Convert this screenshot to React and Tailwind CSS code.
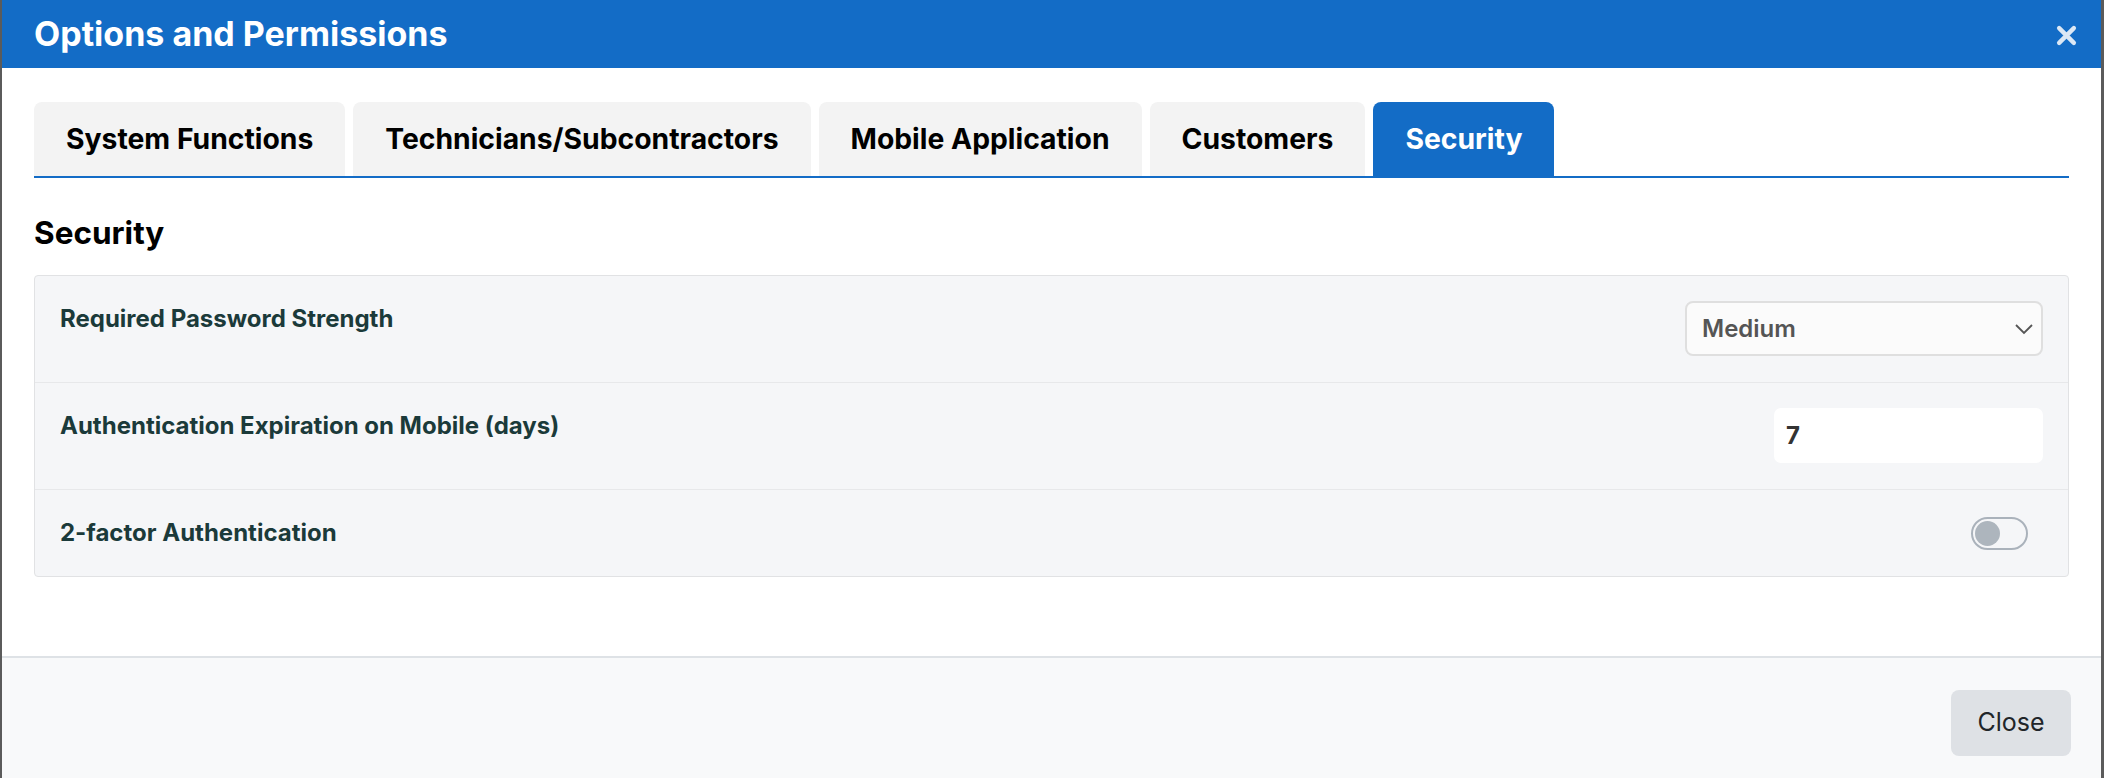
export default function App() {
  const tabs = ["System Functions", "Technicians/Subcontractors", "Mobile Application", "Customers", "Security"];
  return (
    <div className="w-full h-[778px] bg-[#5b5b5b] flex pl-[2px] pr-[3px]" style={{ fontFamily: "Inter, 'Noto Sans', sans-serif" }}>
      <div className="flex-1 h-full bg-white flex flex-col">
        <div className="h-[68px] bg-[#136cc6] flex items-center justify-between pl-[32px] pr-[24px] shrink-0">
          <div className="text-[34px] font-bold text-white leading-none">Options and Permissions</div>
          <svg width="21" height="21" viewBox="0 0 20 20" className="mt-[2px]">
            <path d="M3 3 L17 17 M17 3 L3 17" stroke="#dce8f5" strokeWidth="4.2" strokeLinecap="round" />
          </svg>
        </div>
        <div className="flex-1 px-[32px] pt-[34px]">
          <div className="flex items-end gap-[8px] border-b-2 border-[#136cc6]">
            {tabs.map((t) => {
              const active = t === "Security";
              return (
                <div
                  key={t}
                  className={
                    active
                      ? "h-[74px] px-[32px] rounded-t-[8px] bg-[#136cc6] text-white text-[28.3px] font-bold flex items-center"
                      : "h-[74px] px-[32px] rounded-t-[8px] bg-[#f3f3f3] text-[#000] text-[28.3px] font-bold flex items-center"
                  }
                >
                  {t}
                </div>
              );
            })}
          </div>
          <div className="mt-[37px] text-[31.5px] font-bold leading-[36px] text-black">Security</div>
          <div className="mt-[24px] border-[1.5px] border-[#e1e2e4] rounded-[4px] bg-[#f5f6f8]">
            <div className="flex items-start justify-between px-[25px] pt-[25px] pb-[26px] border-b border-[#e7e8ea]">
              <div className="text-[24px] font-bold leading-[36px] text-[#1b3a3a]">Required Password Strength</div>
              <div className="w-[358px] h-[55px] rounded-[8px] border-2 border-[#dfdfdf] bg-[#fbfbfb] flex items-center justify-between pl-[15px] pr-[7px]">
                <span className="text-[24px] font-semibold text-[#555]">Medium</span>
                <svg width="20" height="12" viewBox="0 0 20 12">
                  <path d="M2 2 L10 10 L18 2" fill="none" stroke="#555" strokeWidth="1.8" />
                </svg>
              </div>
            </div>
            <div className="flex items-start justify-between px-[25px] pt-[25px] pb-[26px] border-b border-[#e7e8ea]">
              <div className="text-[24px] font-bold leading-[36px] text-[#1b3a3a]">Authentication Expiration on Mobile (days)</div>
              <div className="w-[269px] h-[55px] rounded-[7px] bg-white flex items-center pl-[12px]">
                <span className="text-[24px] font-bold text-[#333]">7</span>
              </div>
            </div>
            <div className="flex items-start justify-between px-[25px] pt-[25px] pb-[25px]">
              <div className="text-[24px] font-bold leading-[36px] text-[#1b3a3a]">2-factor Authentication</div>
              <div className="h-[36px] flex items-center mr-[15px]">
                <div className="w-[57px] h-[33px] rounded-full border-2 border-[#aab2bb] bg-[#f5f6f8] flex items-center pl-[2px]">
                  <div className="w-[25px] h-[25px] rounded-full bg-[#adb5bd]" />
                </div>
              </div>
            </div>
          </div>
        </div>
        <div className="h-[122px] shrink-0 border-t-2 border-[#dee2e6] bg-[#f8f9fa] flex justify-end items-start pt-[32px] pr-[30px]">
          <div className="w-[120px] h-[66px] rounded-[8px] bg-[#dee1e5] flex items-center justify-center text-[25px] text-[#212529]">Close</div>
        </div>
      </div>
    </div>
  );
}
